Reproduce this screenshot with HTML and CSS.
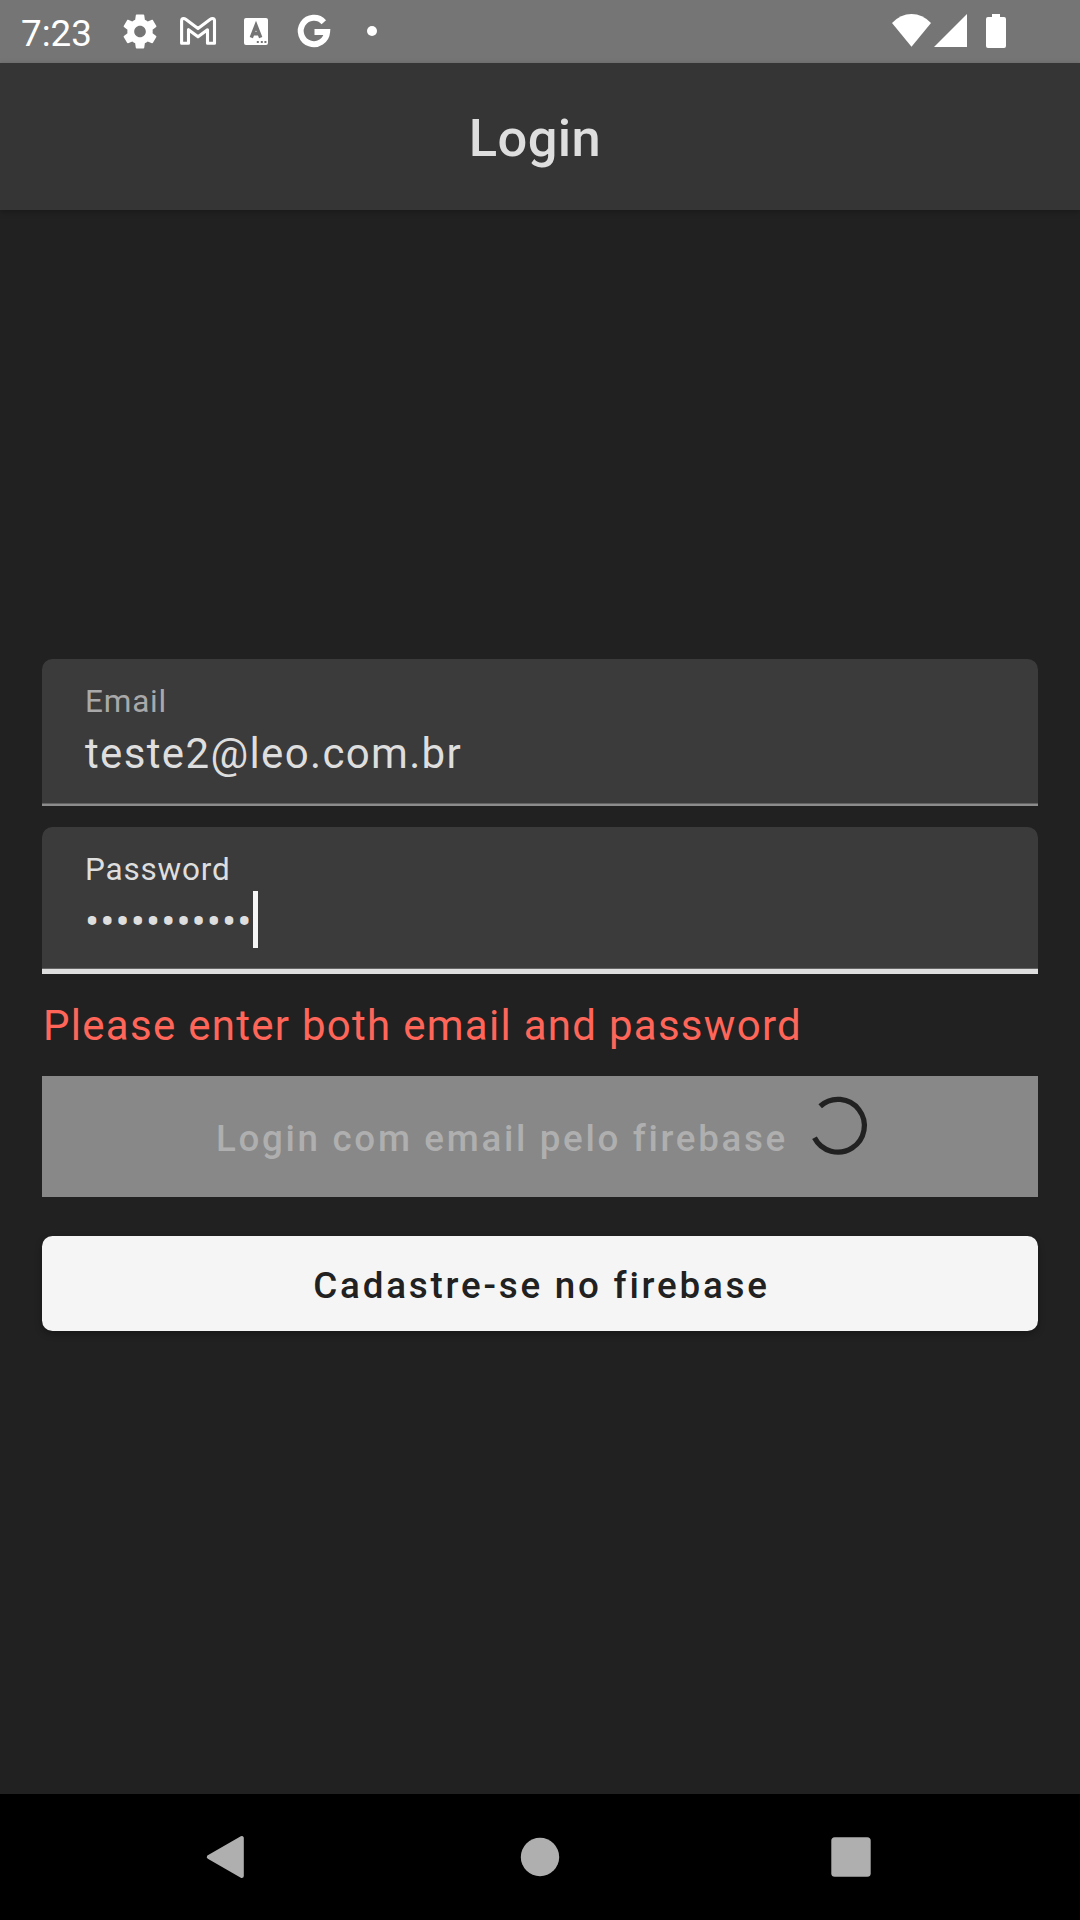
FILE: index.html
```html
<!DOCTYPE html>
<html lang="pt-BR">
<head>
<meta charset="utf-8">
<title>Login</title>
<link rel="stylesheet" href="styles.css">
</head>
<body>
<div class="screen">
  <div class="status">
    <span class="time">7:23</span>
    <svg class="status-left" width="290" height="63" viewBox="0 0 290 63" fill="#fff">
      <path transform="translate(18.9 10.4) scale(1.76)" fill-rule="evenodd" d="M19.14 12.94c.04-.3.06-.61.06-.94 0-.32-.02-.64-.07-.94l2.03-1.58c.18-.14.23-.41.12-.61l-1.92-3.32c-.12-.22-.37-.29-.59-.22l-2.39.96c-.5-.38-1.03-.7-1.62-.94l-.36-2.54c-.04-.24-.24-.41-.48-.41h-3.84c-.24 0-.43.17-.47.41l-.36 2.54c-.59.24-1.13.57-1.62.94l-2.39-.96c-.22-.08-.47 0-.59.22L2.74 8.87c-.12.21-.08.47.12.61l2.03 1.58c-.05.3-.09.63-.09.94s.02.64.07.94l-2.03 1.58c-.18.14-.23.41-.12.61l1.92 3.32c.12.22.37.29.59.22l2.39-.96c.5.38 1.03.7 1.62.94l.36 2.54c.05.24.24.41.48.41h3.84c.24 0 .44-.17.47-.41l.36-2.54c.59-.24 1.13-.56 1.62-.94l2.39.96c.22.08.47 0 .59-.22l1.92-3.32c.12-.22.07-.47-.12-.61l-2.01-1.58zM12 15.3c-1.82 0-3.3-1.48-3.3-3.3s1.48-3.3 3.3-3.3 3.3 1.48 3.3 3.3-1.48 3.3-3.3 3.3z"/>
      <path d="M81.600 43.300 V21 Q81.600 18.500 83.500 18.500 Q84.700 18.500 86 19.500 L98 28.600 L110 19.500 Q111.300 18.500 112.500 18.500 Q114.500 18.500 114.500 21 V43.300 H107.500 V29.700 L98 36.800 L88.500 29.700 V43.300 Z" fill="none" stroke="#fff" stroke-width="3.100" stroke-linejoin="round"/>
      <rect x="144" y="18" width="24" height="27" rx="2"/>
      <path d="M151.300 37.600 L156 25.500 L160.700 37.600 M153 33.800 H159" fill="none" stroke="#757575" stroke-width="3.500"/>
      <path d="M156.800 41h2v2h-2zM160.800 41h2v2h-2zM164.400 41h2v2h-2z" fill="#757575"/>
      <path d="M223.800 22.200 A13.200 13.200 0 1 0 227.100 32 H214.500" fill="none" stroke="#fff" stroke-width="6"/>
      <circle cx="272" cy="31" r="5"/>
    </svg>
    <svg class="status-right" width="120" height="63" viewBox="0 0 120 63" fill="#fff">
      <path d="M0 23 Q8.500 14 19.500 14 Q30.500 14 39 23 L19.500 46.700 Z"/>
      <path d="M42 47 L75 14 V47 Z"/>
      <path d="M100 14h8v3h4q2 0 2 2v27q0 2-2 2H96q-2 0-2-2V19q0-2 2-2h4z"/>
    </svg>
  </div>
  <header class="appbar"><h1 class="title">Login</h1></header>
  <main class="content">
    <div class="field">
      <div class="label">Email</div>
      <div class="value">teste2@leo.com.br</div>
    </div>
    <div class="field focused">
      <div class="label">Password</div>
      <div class="value">•••••••••••<span class="cursor"></span></div>
    </div>
    <p class="error">Please enter both email and password</p>
    <div class="button disabled">
      <span class="button-text">Login com email pelo firebase</span>
      <svg class="spinner" width="60" height="60" viewBox="0 0 60 60">
        <path d="M12.200 10.200 A26.400 26.400 0 1 1 6.500 41.800" fill="none" stroke="#212121" stroke-width="5.250"/>
      </svg>
    </div>
    <div class="button primary"><span class="button-text">Cadastre-se no firebase</span></div>
  </main>
  <nav class="navbar">
    <svg width="40" height="44" viewBox="0 0 40 44"><path d="M-0.200 22 L32.800 3 V41 Z" fill="#afafaf" stroke="#afafaf" stroke-width="4" stroke-linejoin="round"/></svg>
    <svg width="40" height="44" viewBox="0 0 40 44"><circle cx="20" cy="22" r="19.200" fill="#afafaf"/></svg>
    <svg width="40" height="44" viewBox="0 0 40 44"><rect x="0.300" y="2.200" width="39.400" height="39.600" rx="3.500" fill="#afafaf"/></svg>
  </nav>
</div>
</body>
</html>
```
FILE: styles.css
```css
* { box-sizing: border-box; }
body { margin: 0; background: #212121; font-family: Roboto, "Noto Sans", sans-serif; }
.screen { width: 1080px; height: 1920px; display: flex; flex-direction: column; overflow: hidden; }
svg { display: block; flex: none; overflow: visible; }

.status { height: 63px; flex: none; background: #757575; display: flex; }
.time { width: 100px; padding-left: 21px; color: #fff; font-size: 36.75px; line-height: 67px; }
.status-right { margin-left: auto; margin-right: 68px; }

.appbar { height: 147px; flex: none; background: #353535; padding: 45px 10px 0 0; box-shadow: 0 2px 6px rgba(0, 0, 0, .25); }
.title { margin: 0; text-align: center; color: #dedede; font-size: 52.5px; font-weight: 500; line-height: 60px; letter-spacing: .39px; }

.content { flex: 1; display: flex; flex-direction: column; padding: 449px 42px 0; }
.field { height: 147px; background: #3b3b3b; border-radius: 10.5px 10.5px 0 0; padding: 25px 42px 0 43px; margin-bottom: 21px; box-shadow: inset 0 -2.6px #8c8c8c; }
.label { color: #a9a9a9; font-size: 31.5px; line-height: 36px; letter-spacing: .8px; }
.value { margin-top: 10px; height: 57px; display: flex; color: #dedede; font-size: 42px; line-height: 48px; letter-spacing: 1.35px; }
.focused { margin-bottom: 0; box-shadow: inset 0 -5.2px #dedede; }
.focused .label { color: #dedede; }
.focused .value { letter-spacing: 1.06px; }
.cursor { width: 5.25px; height: 57px; margin-top: -7px; background: #f5f5f5; }

.error { margin: 28px 0 26px; padding-left: 1px; color: #ff6659; font-size: 42px; line-height: 48px; letter-spacing: 1.28px; white-space: nowrap; }

.button { display: flex; font-size: 36.75px; font-weight: 500; line-height: 44px; white-space: nowrap; }
.disabled { height: 121px; background: #888; color: #afafaf; padding: 41px 0 0 174px; letter-spacing: 2.67px; }
.spinner { margin: -21px 0 0 20px; }
.primary { height: 95px; margin-top: 39px; background: #f5f5f5; color: #212121; border-radius: 10.5px; justify-content: center; padding: 28px 0 0 3px; letter-spacing: 2.79px; box-shadow: 0 3px 7px rgba(0, 0, 0, .3); }

.navbar { height: 126px; flex: none; background: #000; display: flex; align-items: center; justify-content: space-between; padding: 0 209px; }
```
